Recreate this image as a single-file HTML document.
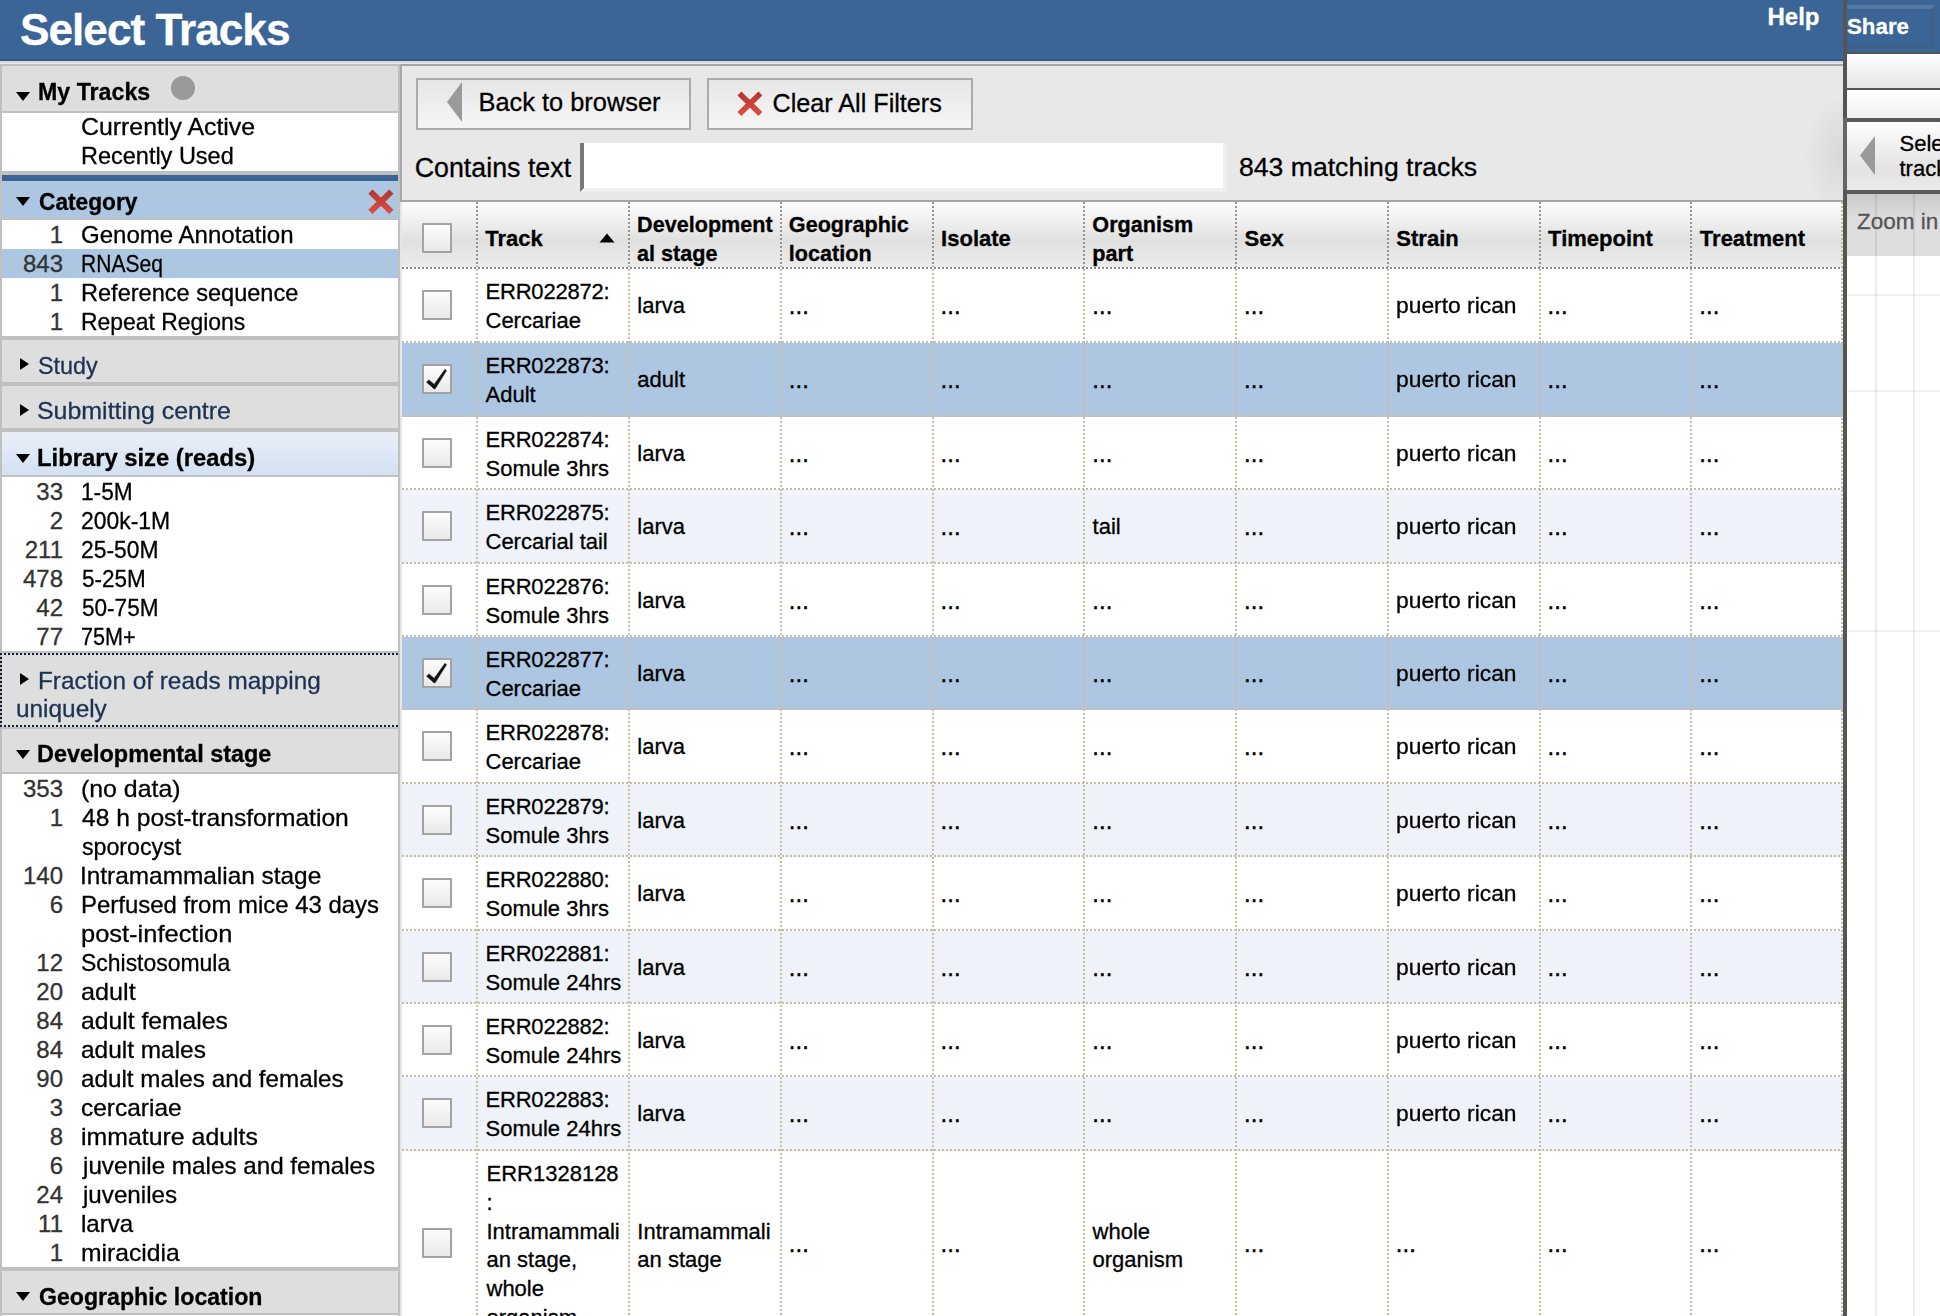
<!DOCTYPE html><html><head><meta charset="utf-8"><title>Select Tracks</title><style>
*{margin:0;padding:0;box-sizing:border-box}
html,body{width:1940px;height:1316px;overflow:hidden;background:#fff;font-family:"Liberation Sans", sans-serif;color:#000}
.ab{position:absolute}
.t{position:absolute;white-space:nowrap;line-height:1;-webkit-text-stroke:0.3px currentColor}
.tri-d{position:absolute;width:0;height:0;border-left:7px solid transparent;border-right:7px solid transparent;border-top:9px solid #000}
.tri-r{position:absolute;width:0;height:0;border-top:6.5px solid transparent;border-bottom:6.5px solid transparent;border-left:9px solid #000}
.lh{font-size:23px;font-weight:bold}
.lc{font-size:24px;color:#1b3252}
.li{font-size:24px}
.cnt{position:absolute;white-space:nowrap;line-height:1;-webkit-text-stroke:0.3px currentColor;font-size:24px;color:#333;text-align:right;width:60px}
.cb{position:absolute;width:30px;height:30px;border:2px solid #a3a3a3;background:linear-gradient(#fdfdfd,#e9e9e9);border-radius:1px}
.vd{position:absolute;width:2px;background:repeating-linear-gradient(to bottom,#c9bda3 0 2px,transparent 2px 4px)}
.vdh{position:absolute;width:2px;background:repeating-linear-gradient(to bottom,#9c9585 0 2px,transparent 2px 4px)}
.hd{position:absolute;height:2px;background:repeating-linear-gradient(to right,#c9bda3 0 2px,transparent 2px 4px)}
.hdh{position:absolute;height:2px;background:repeating-linear-gradient(to right,#8a8a8a 0 2px,transparent 2px 4px)}
.th{font-size:22px;font-weight:bold}
.td{font-size:22px}
</style></head><body>
<div class="ab" style="left:0px;top:0px;width:1843px;height:61px;background:#3a6596;"></div>
<div class="ab" style="left:0px;top:59px;width:1843px;height:2px;background:#2f5b8c;"></div>
<div class="ab" style="left:0px;top:61px;width:1843px;height:2px;background:#d8d8d8;"></div>
<div class="ab" style="left:0px;top:63px;width:1843px;height:1px;background:#e8e8e8;"></div>
<div class="t " style="left:20px;top:8.18px;font-size:44.2px;font-weight:bold;color:#fff;letter-spacing:-1px">Select Tracks</div>
<div class="t " style="left:1767.5px;top:4.98px;font-size:24px;font-weight:bold;color:#fff">Help</div>
<div class="ab" style="left:0px;top:64px;width:400px;height:1252px;background:#c0c0c0;"></div>
<div class="ab" style="left:2px;top:66px;width:396px;height:45px;background:#dedede;"></div>
<div class="tri-d" style="left:16px;top:91.5px"></div>
<div class="t " style="left:37.79px;top:80.53px;font-size:23px;transform:scaleX(1.0087);transform-origin:0 0;font-weight:bold">My Tracks</div>
<div class="ab" style="left:171px;top:76px;width:24px;height:24px;border-radius:50%;background:#9a9a9a;filter:blur(0.6px)"></div>
<div class="ab" style="left:2px;top:113px;width:396px;height:58px;background:#fff;"></div>
<div class="t " style="left:80.96px;top:115.28px;font-size:24px;transform:scaleX(1.0361);transform-origin:0 0;">Currently Active</div>
<div class="t " style="left:81.02px;top:144.28px;font-size:24px;transform:scaleX(0.9784);transform-origin:0 0;">Recently Used</div>
<div class="ab" style="left:2px;top:175px;width:396px;height:6px;background:#3a6494;"></div>
<div class="ab" style="left:2px;top:181px;width:396px;height:37px;background:#adc6e2;"></div>
<div class="tri-d" style="left:16px;top:196.5px"></div>
<div class="t " style="left:38.50px;top:190.53px;font-size:23px;transform:scaleX(0.9870);transform-origin:0 0;font-weight:bold">Category</div>
<svg class="ab" style="left:366px;top:187px" width="30" height="30" viewBox="0 0 30 30"><defs><linearGradient id="rx" x1="0" y1="0" x2="0" y2="1"><stop offset="0" stop-color="#b5362e"/><stop offset="1" stop-color="#d94e43"/></linearGradient><filter id="bl" x="-10%" y="-10%" width="120%" height="120%"><feGaussianBlur stdDeviation="0.45"/></filter></defs><path d="M4.4 4.6 L25.4 24.9 M25.4 4.6 L4.4 24.9" stroke="url(#rx)" stroke-width="6" filter="url(#bl)"/></svg>
<div class="ab" style="left:2px;top:220px;width:396px;height:116px;background:#fff;"></div>
<div class="ab" style="left:2px;top:249px;width:396px;height:29px;background:#adc6e2;"></div>
<div class="cnt" style="left:3px;top:223.18px">1</div>
<div class="t " style="left:81.00px;top:223.18px;font-size:24px;transform:scaleX(1.0017);transform-origin:0 0;">Genome Annotation</div>
<div class="cnt" style="left:3px;top:252.18px">843</div>
<div class="t " style="left:81.12px;top:252.18px;font-size:24px;transform:scaleX(0.8767);transform-origin:0 0;">RNASeq</div>
<div class="cnt" style="left:3px;top:281.18px">1</div>
<div class="t " style="left:81.02px;top:281.18px;font-size:24px;transform:scaleX(0.9812);transform-origin:0 0;">Reference sequence</div>
<div class="cnt" style="left:3px;top:310.18px">1</div>
<div class="t " style="left:81.05px;top:310.18px;font-size:24px;transform:scaleX(0.9538);transform-origin:0 0;">Repeat Regions</div>
<div class="ab" style="left:2px;top:340px;width:396px;height:42px;background:#dedede;"></div>
<div class="tri-r" style="left:19.5px;top:357.5px"></div>
<div class="t " style="left:37.83px;top:353.98px;font-size:24px;transform:scaleX(0.9723);transform-origin:0 0;color:#1b3252">Study</div>
<div class="ab" style="left:2px;top:386px;width:396px;height:42px;background:#dedede;"></div>
<div class="tri-r" style="left:19.5px;top:403.5px"></div>
<div class="t " style="left:37.48px;top:399.26px;font-size:24.5px;transform:scaleX(1.0173);transform-origin:0 0;color:#1b3252">Submitting centre</div>
<div class="ab" style="left:2px;top:432px;width:396px;height:43px;background:linear-gradient(#e9eff8,#d3e1f1);"></div>
<div class="tri-d" style="left:16px;top:453.5px"></div>
<div class="t " style="left:37.49px;top:446.71px;font-size:23.5px;transform:scaleX(1.0123);transform-origin:0 0;font-weight:bold">Library size (reads)</div>
<div class="ab" style="left:2px;top:477px;width:396px;height:174px;background:#fff;"></div>
<div class="cnt" style="left:3px;top:480.18px">33</div>
<div class="t " style="left:81.05px;top:480.18px;font-size:24px;transform:scaleX(0.9452);transform-origin:0 0;">1-5M</div>
<div class="cnt" style="left:3px;top:509.18px">2</div>
<div class="t " style="left:81.05px;top:509.18px;font-size:24px;transform:scaleX(0.9542);transform-origin:0 0;">200k-1M</div>
<div class="cnt" style="left:3px;top:538.18px">211</div>
<div class="t " style="left:81.05px;top:538.18px;font-size:24px;transform:scaleX(0.9523);transform-origin:0 0;">25-50M</div>
<div class="cnt" style="left:3px;top:567.18px">478</div>
<div class="t " style="left:82.00px;top:567.18px;font-size:24px;transform:scaleX(0.9353);transform-origin:0 0;">5-25M</div>
<div class="cnt" style="left:3px;top:596.18px">42</div>
<div class="t " style="left:82.00px;top:596.18px;font-size:24px;transform:scaleX(0.9405);transform-origin:0 0;">50-75M</div>
<div class="cnt" style="left:3px;top:625.18px">77</div>
<div class="t " style="left:81.10px;top:625.18px;font-size:24px;transform:scaleX(0.8980);transform-origin:0 0;">75M+</div>
<div class="ab" style="left:2px;top:653px;width:396px;height:74px;background:#dedede;"></div>
<div class="ab" style="left:0;top:653px;width:398px;height:2px;background:repeating-linear-gradient(to right,#0d1d3a 0 2px,transparent 2px 4px)"></div>
<div class="ab" style="left:0;top:725px;width:398px;height:2px;background:repeating-linear-gradient(to right,#0d1d3a 0 2px,transparent 2px 4px)"></div>
<div class="ab" style="left:0;top:653px;width:2px;height:74px;background:repeating-linear-gradient(to bottom,#0d1d3a 0 2px,transparent 2px 4px)"></div>
<div class="tri-r" style="left:19.5px;top:673px"></div>
<div class="t " style="left:38.49px;top:668.51px;font-size:24.2px;transform:scaleX(1.0063);transform-origin:0 0;color:#1b3252">Fraction of reads mapping</div>
<div class="t " style="left:15.99px;top:696.51px;font-size:24.2px;transform:scaleX(1.0077);transform-origin:0 0;color:#1b3252">uniquely</div>
<div class="ab" style="left:2px;top:729px;width:396px;height:43px;background:#dedede;"></div>
<div class="tri-d" style="left:16px;top:750px"></div>
<div class="t " style="left:37.49px;top:743.28px;font-size:23.3px;transform:scaleX(1.0056);transform-origin:0 0;font-weight:bold">Developmental stage</div>
<div class="ab" style="left:2px;top:774px;width:396px;height:493px;background:#fff;"></div>
<div class="cnt" style="left:3px;top:777.18px">353</div>
<div class="t " style="left:80.96px;top:777.18px;font-size:24px;transform:scaleX(1.0365);transform-origin:0 0;">(no data)</div>
<div class="cnt" style="left:3px;top:806.18px">1</div>
<div class="t " style="left:82.00px;top:806.18px;font-size:24px;transform:scaleX(1.0256);transform-origin:0 0;">48 h post-transformation</div>
<div class="t " style="left:82.00px;top:835.18px;font-size:24px;transform:scaleX(0.9657);transform-origin:0 0;">sporocyst</div>
<div class="cnt" style="left:3px;top:864.18px">140</div>
<div class="t " style="left:79.97px;top:864.18px;font-size:24px;transform:scaleX(1.0158);transform-origin:0 0;">Intramammalian stage</div>
<div class="cnt" style="left:3px;top:893.18px">6</div>
<div class="t " style="left:81.00px;top:893.18px;font-size:24px;transform:scaleX(0.9973);transform-origin:0 0;">Perfused from mice 43 days</div>
<div class="t " style="left:80.94px;top:922.18px;font-size:24px;transform:scaleX(1.0606);transform-origin:0 0;">post-infection</div>
<div class="cnt" style="left:3px;top:951.18px">12</div>
<div class="t " style="left:81.04px;top:951.18px;font-size:24px;transform:scaleX(0.9562);transform-origin:0 0;">Schistosomula</div>
<div class="cnt" style="left:3px;top:980.18px">20</div>
<div class="t " style="left:80.95px;top:980.18px;font-size:24px;transform:scaleX(1.0511);transform-origin:0 0;">adult</div>
<div class="cnt" style="left:3px;top:1009.18px">84</div>
<div class="t " style="left:80.97px;top:1009.18px;font-size:24px;transform:scaleX(1.0293);transform-origin:0 0;">adult females</div>
<div class="cnt" style="left:3px;top:1038.18px">84</div>
<div class="t " style="left:80.98px;top:1038.18px;font-size:24px;transform:scaleX(1.0178);transform-origin:0 0;">adult males</div>
<div class="cnt" style="left:3px;top:1067.18px">90</div>
<div class="t " style="left:80.99px;top:1067.18px;font-size:24px;transform:scaleX(1.0099);transform-origin:0 0;">adult males and females</div>
<div class="cnt" style="left:3px;top:1096.18px">3</div>
<div class="t " style="left:80.98px;top:1096.18px;font-size:24px;transform:scaleX(1.0199);transform-origin:0 0;">cercariae</div>
<div class="cnt" style="left:3px;top:1125.18px">8</div>
<div class="t " style="left:80.96px;top:1125.18px;font-size:24px;transform:scaleX(1.0363);transform-origin:0 0;">immature adults</div>
<div class="cnt" style="left:3px;top:1154.18px">6</div>
<div class="t " style="left:83.01px;top:1154.18px;font-size:24px;transform:scaleX(1.0093);transform-origin:0 0;">juvenile males and females</div>
<div class="cnt" style="left:3px;top:1183.18px">24</div>
<div class="t " style="left:83.01px;top:1183.18px;font-size:24px;transform:scaleX(1.0076);transform-origin:0 0;">juveniles</div>
<div class="cnt" style="left:3px;top:1212.18px">11</div>
<div class="t " style="left:81.00px;top:1212.18px;font-size:24px;transform:scaleX(1.0044);transform-origin:0 0;">larva</div>
<div class="cnt" style="left:3px;top:1241.18px">1</div>
<div class="t " style="left:80.97px;top:1241.18px;font-size:24px;transform:scaleX(1.0285);transform-origin:0 0;">miracidia</div>
<div class="ab" style="left:2px;top:1271px;width:396px;height:42px;background:#dedede;"></div>
<div class="tri-d" style="left:16px;top:1292px"></div>
<div class="t " style="left:38.50px;top:1285.88px;font-size:23.3px;transform:scaleX(0.9920);transform-origin:0 0;font-weight:bold">Geographic location</div>
<div class="ab" style="left:2px;top:1315px;width:396px;height:1px;background:#fff;"></div>
<div class="ab" style="left:400px;top:64px;width:1443px;height:2px;background:#a6a6a6;"></div>
<div class="ab" style="left:400px;top:66px;width:2px;height:136px;background:#a6a6a6;"></div>
<div class="ab" style="left:402px;top:66px;width:1441px;height:134px;background:#e8e8e8;"></div>
<div class="ab" style="left:400px;top:200px;width:1443px;height:2px;background:#a6a6a6;"></div>
<div class="ab" style="left:416px;top:78px;width:275px;height:52px;border:2px solid #ababab;background:linear-gradient(#e6e6e6,#f0f0f0 60%,#f5f5f5)"></div>
<svg class="ab" style="left:445px;top:80px" width="20" height="44" viewBox="0 0 20 44"><path d="M17 2 L17 42 L2 22 Z" fill="#9a9a9a"/></svg>
<div class="t " style="left:478.5px;top:89.70px;font-size:25.4px;">Back to browser</div>
<div class="ab" style="left:707px;top:78px;width:266px;height:52px;border:2px solid #ababab;background:linear-gradient(#e6e6e6,#f0f0f0 60%,#f5f5f5)"></div>
<svg class="ab" style="left:735px;top:89px" width="30" height="30" viewBox="0 0 30 30"><path d="M4.4 4.6 L25.4 24.9 M25.4 4.6 L4.4 24.9" stroke="url(#rx)" stroke-width="5.6" filter="url(#bl)"/></svg>
<div class="t " style="left:772.5px;top:91.17px;font-size:25.2px;">Clear All Filters</div>
<div class="t " style="left:414.7px;top:154.51px;font-size:26.8px;">Contains text</div>
<div class="ab" style="left:580px;top:143px;width:646px;height:49px;background:#fff;border-left:4px solid #787878;border-right:3px solid #f0f0f0;border-bottom:4px solid #f0f0f0"></div>
<div class="t " style="left:1239px;top:153.88px;font-size:26.6px;">843 matching tracks</div>
<div class="ab" style="left:402px;top:202px;width:1441px;height:65px;background:linear-gradient(#fdfdfd 0%,#f2f2f2 25%,#e0e0e0 60%,#e6e6e6 80%,#ebebeb 100%);"></div>
<div class="hdh" style="left:402px;top:267px;width:1441px"></div>
<div class="ab" style="left:402px;top:269px;width:1441px;height:74px;background:#fff;"></div>
<div class="hd" style="left:402px;top:341px;width:1441px"></div>
<div class="ab" style="left:402px;top:343px;width:1441px;height:74px;background:#adc6e2;"></div>
<div class="hd" style="left:402px;top:415px;width:1441px"></div>
<div class="ab" style="left:402px;top:417px;width:1441px;height:73px;background:#fff;"></div>
<div class="hd" style="left:402px;top:488px;width:1441px"></div>
<div class="ab" style="left:402px;top:490px;width:1441px;height:74px;background:#eff3f9;"></div>
<div class="hd" style="left:402px;top:562px;width:1441px"></div>
<div class="ab" style="left:402px;top:564px;width:1441px;height:73px;background:#fff;"></div>
<div class="hd" style="left:402px;top:635px;width:1441px"></div>
<div class="ab" style="left:402px;top:637px;width:1441px;height:73px;background:#adc6e2;"></div>
<div class="hd" style="left:402px;top:708px;width:1441px"></div>
<div class="ab" style="left:402px;top:710px;width:1441px;height:74px;background:#fff;"></div>
<div class="hd" style="left:402px;top:782px;width:1441px"></div>
<div class="ab" style="left:402px;top:784px;width:1441px;height:73px;background:#eff3f9;"></div>
<div class="hd" style="left:402px;top:855px;width:1441px"></div>
<div class="ab" style="left:402px;top:857px;width:1441px;height:74px;background:#fff;"></div>
<div class="hd" style="left:402px;top:929px;width:1441px"></div>
<div class="ab" style="left:402px;top:931px;width:1441px;height:73px;background:#eff3f9;"></div>
<div class="hd" style="left:402px;top:1002px;width:1441px"></div>
<div class="ab" style="left:402px;top:1004px;width:1441px;height:73px;background:#fff;"></div>
<div class="hd" style="left:402px;top:1075px;width:1441px"></div>
<div class="ab" style="left:402px;top:1077px;width:1441px;height:74px;background:#eff3f9;"></div>
<div class="hd" style="left:402px;top:1149px;width:1441px"></div>
<div class="ab" style="left:402px;top:1151px;width:1441px;height:165px;background:#fff;"></div>
<div class="ab" style="left:400px;top:202px;width:2px;height:1114px;background:#e6e6e6;"></div>
<div class="vdh" style="left:476px;top:202px;height:65px"></div>
<div class="vd" style="left:476px;top:269px;height:1047px"></div>
<div class="vdh" style="left:628px;top:202px;height:65px"></div>
<div class="vd" style="left:628px;top:269px;height:1047px"></div>
<div class="vdh" style="left:780px;top:202px;height:65px"></div>
<div class="vd" style="left:780px;top:269px;height:1047px"></div>
<div class="vdh" style="left:932px;top:202px;height:65px"></div>
<div class="vd" style="left:932px;top:269px;height:1047px"></div>
<div class="vdh" style="left:1083px;top:202px;height:65px"></div>
<div class="vd" style="left:1083px;top:269px;height:1047px"></div>
<div class="vdh" style="left:1235px;top:202px;height:65px"></div>
<div class="vd" style="left:1235px;top:269px;height:1047px"></div>
<div class="vdh" style="left:1387px;top:202px;height:65px"></div>
<div class="vd" style="left:1387px;top:269px;height:1047px"></div>
<div class="vdh" style="left:1539px;top:202px;height:65px"></div>
<div class="vd" style="left:1539px;top:269px;height:1047px"></div>
<div class="vdh" style="left:1690px;top:202px;height:65px"></div>
<div class="vd" style="left:1690px;top:269px;height:1047px"></div>
<div class="vd" style="left:1841px;top:202px;height:1114px"></div>
<div class="cb" style="left:422px;top:223px"></div>
<div class="t " style="left:485.2px;top:228.28px;font-size:22px;font-weight:bold">Track</div>
<div class="t " style="left:637.1px;top:214.02px;font-size:21.6px;font-weight:bold">Development</div>
<div class="t " style="left:637.1px;top:242.82px;font-size:21.6px;font-weight:bold">al stage</div>
<div class="t " style="left:788.85px;top:214.02px;font-size:21.6px;font-weight:bold">Geographic</div>
<div class="t " style="left:788.85px;top:242.82px;font-size:21.6px;font-weight:bold">location</div>
<div class="t " style="left:941.1px;top:228.28px;font-size:22px;font-weight:bold">Isolate</div>
<div class="t " style="left:1092.35px;top:214.02px;font-size:21.6px;font-weight:bold">Organism</div>
<div class="t " style="left:1092.35px;top:242.82px;font-size:21.6px;font-weight:bold">part</div>
<div class="t " style="left:1244.6px;top:228.28px;font-size:22px;font-weight:bold">Sex</div>
<div class="t " style="left:1396.35px;top:228.28px;font-size:22px;font-weight:bold">Strain</div>
<div class="t " style="left:1548.1px;top:228.28px;font-size:22px;font-weight:bold">Timepoint</div>
<div class="t " style="left:1699.85px;top:228.28px;font-size:22px;font-weight:bold">Treatment</div>
<svg class="ab" style="left:598px;top:232px" width="18" height="12" viewBox="0 0 18 12"><path d="M1.5 10.5 L9 1.5 L16.5 10.5 Z" fill="#000"/></svg>
<div class="cb" style="left:422px;top:290.0px"></div>
<div class="t " style="left:485.5px;top:281.38px;font-size:22px;letter-spacing:-0.2px">ERR022872:</div>
<div class="t " style="left:485.5px;top:310.08px;font-size:22px;">Cercariae</div>
<div class="t " style="left:637.3000000000001px;top:295.48px;font-size:22px;">larva</div>
<div class="t " style="left:789.0500000000001px;top:296.48px;font-size:22px;letter-spacing:0.6px;-webkit-text-stroke:0.6px #000">...</div>
<div class="t " style="left:940.8000000000001px;top:296.48px;font-size:22px;letter-spacing:0.6px;-webkit-text-stroke:0.6px #000">...</div>
<div class="t " style="left:1092.55px;top:296.48px;font-size:22px;letter-spacing:0.6px;-webkit-text-stroke:0.6px #000">...</div>
<div class="t " style="left:1244.3px;top:296.48px;font-size:22px;letter-spacing:0.6px;-webkit-text-stroke:0.6px #000">...</div>
<div class="t " style="left:1396.06px;top:295.48px;font-size:22px;transform:scaleX(1.0374);transform-origin:0 0;">puerto rican</div>
<div class="t " style="left:1547.8px;top:296.48px;font-size:22px;letter-spacing:0.6px;-webkit-text-stroke:0.6px #000">...</div>
<div class="t " style="left:1699.55px;top:296.48px;font-size:22px;letter-spacing:0.6px;-webkit-text-stroke:0.6px #000">...</div>
<div class="cb" style="left:422px;top:364.0px"></div>
<svg class="ab" style="left:422px;top:364.0px" width="30" height="30" viewBox="0 0 30 30"><path d="M4.6 18.2 L6.9 15.9 L12.2 20.4 L22.9 5.4 L24.5 6.6 L13.3 24.6 L12.2 24.9 Z" fill="#111" stroke="#111" stroke-width="0.6" stroke-linejoin="round"/></svg>
<div class="t " style="left:485.5px;top:355.38px;font-size:22px;letter-spacing:-0.2px">ERR022873:</div>
<div class="t " style="left:485.5px;top:384.08px;font-size:22px;">Adult</div>
<div class="t " style="left:637.3000000000001px;top:369.48px;font-size:22px;">adult</div>
<div class="t " style="left:789.0500000000001px;top:370.48px;font-size:22px;letter-spacing:0.6px;-webkit-text-stroke:0.6px #000">...</div>
<div class="t " style="left:940.8000000000001px;top:370.48px;font-size:22px;letter-spacing:0.6px;-webkit-text-stroke:0.6px #000">...</div>
<div class="t " style="left:1092.55px;top:370.48px;font-size:22px;letter-spacing:0.6px;-webkit-text-stroke:0.6px #000">...</div>
<div class="t " style="left:1244.3px;top:370.48px;font-size:22px;letter-spacing:0.6px;-webkit-text-stroke:0.6px #000">...</div>
<div class="t " style="left:1396.06px;top:369.48px;font-size:22px;transform:scaleX(1.0374);transform-origin:0 0;">puerto rican</div>
<div class="t " style="left:1547.8px;top:370.48px;font-size:22px;letter-spacing:0.6px;-webkit-text-stroke:0.6px #000">...</div>
<div class="t " style="left:1699.55px;top:370.48px;font-size:22px;letter-spacing:0.6px;-webkit-text-stroke:0.6px #000">...</div>
<div class="cb" style="left:422px;top:437.5px"></div>
<div class="t " style="left:485.5px;top:429.38px;font-size:22px;letter-spacing:-0.2px">ERR022874:</div>
<div class="t " style="left:485.5px;top:458.08px;font-size:22px;">Somule 3hrs</div>
<div class="t " style="left:637.3000000000001px;top:443.48px;font-size:22px;">larva</div>
<div class="t " style="left:789.0500000000001px;top:444.48px;font-size:22px;letter-spacing:0.6px;-webkit-text-stroke:0.6px #000">...</div>
<div class="t " style="left:940.8000000000001px;top:444.48px;font-size:22px;letter-spacing:0.6px;-webkit-text-stroke:0.6px #000">...</div>
<div class="t " style="left:1092.55px;top:444.48px;font-size:22px;letter-spacing:0.6px;-webkit-text-stroke:0.6px #000">...</div>
<div class="t " style="left:1244.3px;top:444.48px;font-size:22px;letter-spacing:0.6px;-webkit-text-stroke:0.6px #000">...</div>
<div class="t " style="left:1396.06px;top:443.48px;font-size:22px;transform:scaleX(1.0374);transform-origin:0 0;">puerto rican</div>
<div class="t " style="left:1547.8px;top:444.48px;font-size:22px;letter-spacing:0.6px;-webkit-text-stroke:0.6px #000">...</div>
<div class="t " style="left:1699.55px;top:444.48px;font-size:22px;letter-spacing:0.6px;-webkit-text-stroke:0.6px #000">...</div>
<div class="cb" style="left:422px;top:511.0px"></div>
<div class="t " style="left:485.5px;top:502.38px;font-size:22px;letter-spacing:-0.2px">ERR022875:</div>
<div class="t " style="left:485.5px;top:531.08px;font-size:22px;">Cercarial tail</div>
<div class="t " style="left:637.3000000000001px;top:516.48px;font-size:22px;">larva</div>
<div class="t " style="left:789.0500000000001px;top:517.48px;font-size:22px;letter-spacing:0.6px;-webkit-text-stroke:0.6px #000">...</div>
<div class="t " style="left:940.8000000000001px;top:517.48px;font-size:22px;letter-spacing:0.6px;-webkit-text-stroke:0.6px #000">...</div>
<div class="t " style="left:1092.55px;top:516.48px;font-size:22px;">tail</div>
<div class="t " style="left:1244.3px;top:517.48px;font-size:22px;letter-spacing:0.6px;-webkit-text-stroke:0.6px #000">...</div>
<div class="t " style="left:1396.06px;top:516.48px;font-size:22px;transform:scaleX(1.0374);transform-origin:0 0;">puerto rican</div>
<div class="t " style="left:1547.8px;top:517.48px;font-size:22px;letter-spacing:0.6px;-webkit-text-stroke:0.6px #000">...</div>
<div class="t " style="left:1699.55px;top:517.48px;font-size:22px;letter-spacing:0.6px;-webkit-text-stroke:0.6px #000">...</div>
<div class="cb" style="left:422px;top:584.5px"></div>
<div class="t " style="left:485.5px;top:576.38px;font-size:22px;letter-spacing:-0.2px">ERR022876:</div>
<div class="t " style="left:485.5px;top:605.08px;font-size:22px;">Somule 3hrs</div>
<div class="t " style="left:637.3000000000001px;top:590.48px;font-size:22px;">larva</div>
<div class="t " style="left:789.0500000000001px;top:591.48px;font-size:22px;letter-spacing:0.6px;-webkit-text-stroke:0.6px #000">...</div>
<div class="t " style="left:940.8000000000001px;top:591.48px;font-size:22px;letter-spacing:0.6px;-webkit-text-stroke:0.6px #000">...</div>
<div class="t " style="left:1092.55px;top:591.48px;font-size:22px;letter-spacing:0.6px;-webkit-text-stroke:0.6px #000">...</div>
<div class="t " style="left:1244.3px;top:591.48px;font-size:22px;letter-spacing:0.6px;-webkit-text-stroke:0.6px #000">...</div>
<div class="t " style="left:1396.06px;top:590.48px;font-size:22px;transform:scaleX(1.0374);transform-origin:0 0;">puerto rican</div>
<div class="t " style="left:1547.8px;top:591.48px;font-size:22px;letter-spacing:0.6px;-webkit-text-stroke:0.6px #000">...</div>
<div class="t " style="left:1699.55px;top:591.48px;font-size:22px;letter-spacing:0.6px;-webkit-text-stroke:0.6px #000">...</div>
<div class="cb" style="left:422px;top:657.5px"></div>
<svg class="ab" style="left:422px;top:657.5px" width="30" height="30" viewBox="0 0 30 30"><path d="M4.6 18.2 L6.9 15.9 L12.2 20.4 L22.9 5.4 L24.5 6.6 L13.3 24.6 L12.2 24.9 Z" fill="#111" stroke="#111" stroke-width="0.6" stroke-linejoin="round"/></svg>
<div class="t " style="left:485.5px;top:649.38px;font-size:22px;letter-spacing:-0.2px">ERR022877:</div>
<div class="t " style="left:485.5px;top:678.08px;font-size:22px;">Cercariae</div>
<div class="t " style="left:637.3000000000001px;top:663.48px;font-size:22px;">larva</div>
<div class="t " style="left:789.0500000000001px;top:664.48px;font-size:22px;letter-spacing:0.6px;-webkit-text-stroke:0.6px #000">...</div>
<div class="t " style="left:940.8000000000001px;top:664.48px;font-size:22px;letter-spacing:0.6px;-webkit-text-stroke:0.6px #000">...</div>
<div class="t " style="left:1092.55px;top:664.48px;font-size:22px;letter-spacing:0.6px;-webkit-text-stroke:0.6px #000">...</div>
<div class="t " style="left:1244.3px;top:664.48px;font-size:22px;letter-spacing:0.6px;-webkit-text-stroke:0.6px #000">...</div>
<div class="t " style="left:1396.06px;top:663.48px;font-size:22px;transform:scaleX(1.0374);transform-origin:0 0;">puerto rican</div>
<div class="t " style="left:1547.8px;top:664.48px;font-size:22px;letter-spacing:0.6px;-webkit-text-stroke:0.6px #000">...</div>
<div class="t " style="left:1699.55px;top:664.48px;font-size:22px;letter-spacing:0.6px;-webkit-text-stroke:0.6px #000">...</div>
<div class="cb" style="left:422px;top:731.0px"></div>
<div class="t " style="left:485.5px;top:722.38px;font-size:22px;letter-spacing:-0.2px">ERR022878:</div>
<div class="t " style="left:485.5px;top:751.08px;font-size:22px;">Cercariae</div>
<div class="t " style="left:637.3000000000001px;top:736.48px;font-size:22px;">larva</div>
<div class="t " style="left:789.0500000000001px;top:737.48px;font-size:22px;letter-spacing:0.6px;-webkit-text-stroke:0.6px #000">...</div>
<div class="t " style="left:940.8000000000001px;top:737.48px;font-size:22px;letter-spacing:0.6px;-webkit-text-stroke:0.6px #000">...</div>
<div class="t " style="left:1092.55px;top:737.48px;font-size:22px;letter-spacing:0.6px;-webkit-text-stroke:0.6px #000">...</div>
<div class="t " style="left:1244.3px;top:737.48px;font-size:22px;letter-spacing:0.6px;-webkit-text-stroke:0.6px #000">...</div>
<div class="t " style="left:1396.06px;top:736.48px;font-size:22px;transform:scaleX(1.0374);transform-origin:0 0;">puerto rican</div>
<div class="t " style="left:1547.8px;top:737.48px;font-size:22px;letter-spacing:0.6px;-webkit-text-stroke:0.6px #000">...</div>
<div class="t " style="left:1699.55px;top:737.48px;font-size:22px;letter-spacing:0.6px;-webkit-text-stroke:0.6px #000">...</div>
<div class="cb" style="left:422px;top:804.5px"></div>
<div class="t " style="left:485.5px;top:796.38px;font-size:22px;letter-spacing:-0.2px">ERR022879:</div>
<div class="t " style="left:485.5px;top:825.08px;font-size:22px;">Somule 3hrs</div>
<div class="t " style="left:637.3000000000001px;top:810.48px;font-size:22px;">larva</div>
<div class="t " style="left:789.0500000000001px;top:811.48px;font-size:22px;letter-spacing:0.6px;-webkit-text-stroke:0.6px #000">...</div>
<div class="t " style="left:940.8000000000001px;top:811.48px;font-size:22px;letter-spacing:0.6px;-webkit-text-stroke:0.6px #000">...</div>
<div class="t " style="left:1092.55px;top:811.48px;font-size:22px;letter-spacing:0.6px;-webkit-text-stroke:0.6px #000">...</div>
<div class="t " style="left:1244.3px;top:811.48px;font-size:22px;letter-spacing:0.6px;-webkit-text-stroke:0.6px #000">...</div>
<div class="t " style="left:1396.06px;top:810.48px;font-size:22px;transform:scaleX(1.0374);transform-origin:0 0;">puerto rican</div>
<div class="t " style="left:1547.8px;top:811.48px;font-size:22px;letter-spacing:0.6px;-webkit-text-stroke:0.6px #000">...</div>
<div class="t " style="left:1699.55px;top:811.48px;font-size:22px;letter-spacing:0.6px;-webkit-text-stroke:0.6px #000">...</div>
<div class="cb" style="left:422px;top:878.0px"></div>
<div class="t " style="left:485.5px;top:869.38px;font-size:22px;letter-spacing:-0.2px">ERR022880:</div>
<div class="t " style="left:485.5px;top:898.08px;font-size:22px;">Somule 3hrs</div>
<div class="t " style="left:637.3000000000001px;top:883.48px;font-size:22px;">larva</div>
<div class="t " style="left:789.0500000000001px;top:884.48px;font-size:22px;letter-spacing:0.6px;-webkit-text-stroke:0.6px #000">...</div>
<div class="t " style="left:940.8000000000001px;top:884.48px;font-size:22px;letter-spacing:0.6px;-webkit-text-stroke:0.6px #000">...</div>
<div class="t " style="left:1092.55px;top:884.48px;font-size:22px;letter-spacing:0.6px;-webkit-text-stroke:0.6px #000">...</div>
<div class="t " style="left:1244.3px;top:884.48px;font-size:22px;letter-spacing:0.6px;-webkit-text-stroke:0.6px #000">...</div>
<div class="t " style="left:1396.06px;top:883.48px;font-size:22px;transform:scaleX(1.0374);transform-origin:0 0;">puerto rican</div>
<div class="t " style="left:1547.8px;top:884.48px;font-size:22px;letter-spacing:0.6px;-webkit-text-stroke:0.6px #000">...</div>
<div class="t " style="left:1699.55px;top:884.48px;font-size:22px;letter-spacing:0.6px;-webkit-text-stroke:0.6px #000">...</div>
<div class="cb" style="left:422px;top:951.5px"></div>
<div class="t " style="left:485.5px;top:943.38px;font-size:22px;letter-spacing:-0.2px">ERR022881:</div>
<div class="t " style="left:485.5px;top:972.08px;font-size:22px;">Somule 24hrs</div>
<div class="t " style="left:637.3000000000001px;top:957.48px;font-size:22px;">larva</div>
<div class="t " style="left:789.0500000000001px;top:958.48px;font-size:22px;letter-spacing:0.6px;-webkit-text-stroke:0.6px #000">...</div>
<div class="t " style="left:940.8000000000001px;top:958.48px;font-size:22px;letter-spacing:0.6px;-webkit-text-stroke:0.6px #000">...</div>
<div class="t " style="left:1092.55px;top:958.48px;font-size:22px;letter-spacing:0.6px;-webkit-text-stroke:0.6px #000">...</div>
<div class="t " style="left:1244.3px;top:958.48px;font-size:22px;letter-spacing:0.6px;-webkit-text-stroke:0.6px #000">...</div>
<div class="t " style="left:1396.06px;top:957.48px;font-size:22px;transform:scaleX(1.0374);transform-origin:0 0;">puerto rican</div>
<div class="t " style="left:1547.8px;top:958.48px;font-size:22px;letter-spacing:0.6px;-webkit-text-stroke:0.6px #000">...</div>
<div class="t " style="left:1699.55px;top:958.48px;font-size:22px;letter-spacing:0.6px;-webkit-text-stroke:0.6px #000">...</div>
<div class="cb" style="left:422px;top:1024.5px"></div>
<div class="t " style="left:485.5px;top:1016.38px;font-size:22px;letter-spacing:-0.2px">ERR022882:</div>
<div class="t " style="left:485.5px;top:1045.08px;font-size:22px;">Somule 24hrs</div>
<div class="t " style="left:637.3000000000001px;top:1030.48px;font-size:22px;">larva</div>
<div class="t " style="left:789.0500000000001px;top:1031.48px;font-size:22px;letter-spacing:0.6px;-webkit-text-stroke:0.6px #000">...</div>
<div class="t " style="left:940.8000000000001px;top:1031.48px;font-size:22px;letter-spacing:0.6px;-webkit-text-stroke:0.6px #000">...</div>
<div class="t " style="left:1092.55px;top:1031.48px;font-size:22px;letter-spacing:0.6px;-webkit-text-stroke:0.6px #000">...</div>
<div class="t " style="left:1244.3px;top:1031.48px;font-size:22px;letter-spacing:0.6px;-webkit-text-stroke:0.6px #000">...</div>
<div class="t " style="left:1396.06px;top:1030.48px;font-size:22px;transform:scaleX(1.0374);transform-origin:0 0;">puerto rican</div>
<div class="t " style="left:1547.8px;top:1031.48px;font-size:22px;letter-spacing:0.6px;-webkit-text-stroke:0.6px #000">...</div>
<div class="t " style="left:1699.55px;top:1031.48px;font-size:22px;letter-spacing:0.6px;-webkit-text-stroke:0.6px #000">...</div>
<div class="cb" style="left:422px;top:1098.0px"></div>
<div class="t " style="left:485.5px;top:1089.38px;font-size:22px;letter-spacing:-0.2px">ERR022883:</div>
<div class="t " style="left:485.5px;top:1118.08px;font-size:22px;">Somule 24hrs</div>
<div class="t " style="left:637.3000000000001px;top:1103.48px;font-size:22px;">larva</div>
<div class="t " style="left:789.0500000000001px;top:1104.48px;font-size:22px;letter-spacing:0.6px;-webkit-text-stroke:0.6px #000">...</div>
<div class="t " style="left:940.8000000000001px;top:1104.48px;font-size:22px;letter-spacing:0.6px;-webkit-text-stroke:0.6px #000">...</div>
<div class="t " style="left:1092.55px;top:1104.48px;font-size:22px;letter-spacing:0.6px;-webkit-text-stroke:0.6px #000">...</div>
<div class="t " style="left:1244.3px;top:1104.48px;font-size:22px;letter-spacing:0.6px;-webkit-text-stroke:0.6px #000">...</div>
<div class="t " style="left:1396.06px;top:1103.48px;font-size:22px;transform:scaleX(1.0374);transform-origin:0 0;">puerto rican</div>
<div class="t " style="left:1547.8px;top:1104.48px;font-size:22px;letter-spacing:0.6px;-webkit-text-stroke:0.6px #000">...</div>
<div class="t " style="left:1699.55px;top:1104.48px;font-size:22px;letter-spacing:0.6px;-webkit-text-stroke:0.6px #000">...</div>
<div class="cb" style="left:422px;top:1228px"></div>
<div class="t " style="left:486.5px;top:1163.38px;font-size:22px;">ERR1328128</div>
<div class="t " style="left:486.5px;top:1192.08px;font-size:22px;">:</div>
<div class="t " style="left:486.5px;top:1220.78px;font-size:22px;">Intramammali</div>
<div class="t " style="left:486.5px;top:1249.48px;font-size:22px;">an stage,</div>
<div class="t " style="left:486.5px;top:1278.18px;font-size:22px;">whole</div>
<div class="t " style="left:486.5px;top:1306.88px;font-size:22px;">organism</div>
<div class="t " style="left:637.3000000000001px;top:1220.78px;font-size:22px;">Intramammali</div>
<div class="t " style="left:637.3000000000001px;top:1249.48px;font-size:22px;">an stage</div>
<div class="t " style="left:1092.55px;top:1220.78px;font-size:22px;">whole</div>
<div class="t " style="left:1092.55px;top:1249.48px;font-size:22px;">organism</div>
<div class="t " style="left:789.0500000000001px;top:1233.88px;font-size:22px;letter-spacing:0.6px;-webkit-text-stroke:0.6px #000">...</div>
<div class="t " style="left:940.8000000000001px;top:1233.88px;font-size:22px;letter-spacing:0.6px;-webkit-text-stroke:0.6px #000">...</div>
<div class="t " style="left:1244.3px;top:1233.88px;font-size:22px;letter-spacing:0.6px;-webkit-text-stroke:0.6px #000">...</div>
<div class="t " style="left:1396.05px;top:1233.88px;font-size:22px;letter-spacing:0.6px;-webkit-text-stroke:0.6px #000">...</div>
<div class="t " style="left:1547.8px;top:1233.88px;font-size:22px;letter-spacing:0.6px;-webkit-text-stroke:0.6px #000">...</div>
<div class="t " style="left:1699.55px;top:1233.88px;font-size:22px;letter-spacing:0.6px;-webkit-text-stroke:0.6px #000">...</div>
<div class="ab" style="left:1843px;top:0px;width:4px;height:1316px;background:#555;"></div>
<div class="ab" style="left:1847px;top:0px;width:93px;height:52px;background:#3a6596;"></div>
<div class="ab" style="left:1847px;top:5px;width:88px;height:44px;border-top:4px solid #56799f;border-right:4px solid #3f6088;border-bottom:4px solid #3f6088"></div>
<div class="t " style="left:1847px;top:16.12px;font-size:22.3px;font-weight:bold;color:#fff">Share</div>
<div class="ab" style="left:1847px;top:52px;width:93px;height:2px;background:#555;"></div>
<div class="ab" style="left:1847px;top:54px;width:93px;height:33.5px;background:linear-gradient(#fdfdfd,#e6e6e6);"></div>
<div class="ab" style="left:1847px;top:87.5px;width:93px;height:2.0px;background:#555;"></div>
<div class="ab" style="left:1847px;top:89.5px;width:93px;height:28.5px;background:linear-gradient(#fff,#f0f0f0);"></div>
<div class="ab" style="left:1847px;top:118px;width:93px;height:4px;background:#5a5a5a;"></div>
<div class="ab" style="left:1847px;top:122px;width:93px;height:68px;background:linear-gradient(#fdfdfd,#e3e3e3 70%,#ebebeb);"></div>
<svg class="ab" style="left:1858px;top:134px" width="20" height="44" viewBox="0 0 20 44"><path d="M17 2 L17 41 L2 21.5 Z" fill="#9a9a9a"/></svg>
<div class="t " style="left:1899.5px;top:133.08px;font-size:22px;">Select</div>
<div class="t " style="left:1899.5px;top:157.68px;font-size:22px;">tracks</div>
<div class="ab" style="left:1847px;top:190px;width:93px;height:4px;background:#5a5a5a;"></div>
<div class="ab" style="left:1847px;top:194px;width:93px;height:62px;background:linear-gradient(#c9c9c9,#dedede 40%,#dedede);"></div>
<div class="t " style="left:1857px;top:210.65px;font-size:22.5px;color:#555">Zoom in</div>
<div class="ab" style="left:1847px;top:294px;width:93px;height:2px;background:#f3f3f3;"></div>
<div class="ab" style="left:1847px;top:390px;width:93px;height:2px;background:#f3f3f3;"></div>
<div class="ab" style="left:1847px;top:630px;width:93px;height:2px;background:#f3f3f3;"></div>
<div class="ab" style="left:1875px;top:194px;width:2px;height:1122px;background:rgba(0,0,0,0.075);"></div>
<div class="ab" style="left:1913px;top:194px;width:2px;height:1122px;background:rgba(0,0,0,0.075);"></div>
<div class="ab" style="left:1843px;top:118px;width:4px;height:72px;background:#666;"></div>
<div class="ab" style="left:1800px;top:100px;width:43px;height:100px;background:radial-gradient(ellipse 40px 60px at 100% 55%, rgba(0,0,0,0.07), rgba(0,0,0,0));"></div>
</body></html>
